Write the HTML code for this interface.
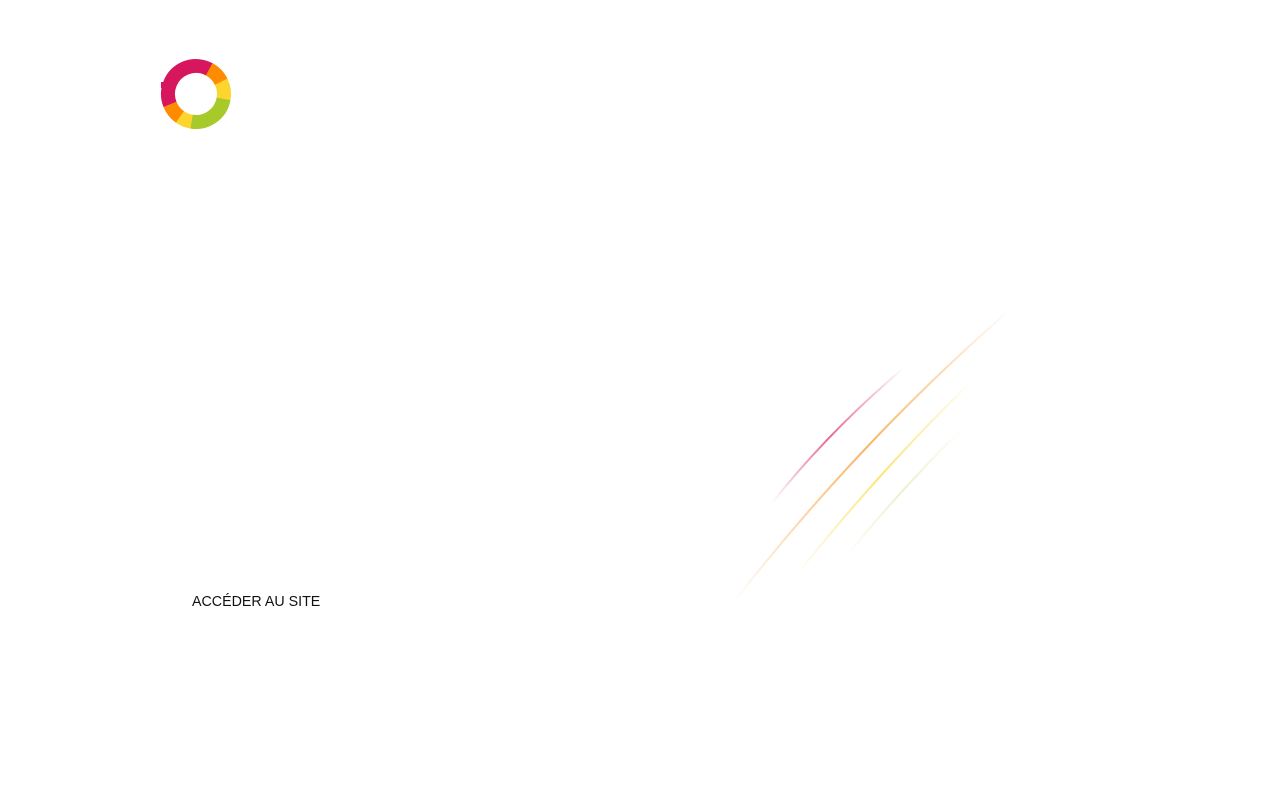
<!DOCTYPE html>
<html><head><meta charset="utf-8"><style>
html,body{margin:0;padding:0;background:#fff;width:1280px;height:800px;overflow:hidden}
.t{position:absolute;left:192px;top:593px;font:15px "Liberation Sans",sans-serif;color:#111;transform:scaleX(0.95);transform-origin:0 0;white-space:nowrap}
svg{position:absolute;left:0;top:0}
</style></head><body>
<svg width="1280" height="800">
<defs>
<linearGradient id="gp" x1="772" y1="503" x2="905" y2="367" gradientUnits="userSpaceOnUse"><stop offset="0" stop-color="#d6175e" stop-opacity="0"/><stop offset=".45" stop-color="#d6175e" stop-opacity=".65"/><stop offset="1" stop-color="#d6175e" stop-opacity="0"/></linearGradient>
<linearGradient id="go" x1="733" y1="603" x2="1013" y2="307" gradientUnits="userSpaceOnUse"><stop offset="0" stop-color="#f7931e" stop-opacity="0"/><stop offset=".5" stop-color="#f7931e" stop-opacity=".7"/><stop offset="1" stop-color="#f7931e" stop-opacity="0"/></linearGradient>
<linearGradient id="gy" x1="795" y1="577" x2="975" y2="378" gradientUnits="userSpaceOnUse"><stop offset="0" stop-color="#fcd116" stop-opacity="0"/><stop offset=".5" stop-color="#fcd116" stop-opacity=".6"/><stop offset="1" stop-color="#fcd116" stop-opacity="0"/></linearGradient>
<linearGradient id="gg" x1="843" y1="560" x2="963" y2="428" gradientUnits="userSpaceOnUse"><stop offset="0" stop-color="#a8c92a" stop-opacity="0"/><stop offset=".5" stop-color="#a8c92a" stop-opacity=".25"/><stop offset="1" stop-color="#a8c92a" stop-opacity="0"/></linearGradient>
</defs>
<path d="M772 503 Q830 430 905 367" stroke="url(#gp)" stroke-width="2" fill="none"/>
<path d="M733 603 Q860 440 1013 307" stroke="url(#go)" stroke-width="2" fill="none"/>
<path d="M795 577 Q880 470 975 378" stroke="url(#gy)" stroke-width="2" fill="none"/>
<path d="M843 560 Q900 490 963 428" stroke="url(#gg)" stroke-width="2" fill="none"/>
<g fill="none" stroke-width="14" transform="translate(196 94)">
<circle r="28" pathLength="360" stroke="#d6175e" stroke-dasharray="141 360" transform="rotate(158)"/>
<circle r="28" pathLength="360" stroke="#ff8c00" stroke-dasharray="37 360" transform="rotate(298)"/>
<circle r="28" pathLength="360" stroke="#fcd62e" stroke-dasharray="37 360" transform="rotate(334)"/>
<circle r="28" pathLength="360" stroke="#a8c92a" stroke-dasharray="90 360" transform="rotate(10)"/>
<circle r="28" pathLength="360" stroke="#fcd62e" stroke-dasharray="27 360" transform="rotate(99)"/>
<circle r="28" pathLength="360" stroke="#ff8c00" stroke-dasharray="33 360" transform="rotate(125)"/>
</g>
<rect x="161" y="82" width="6" height="6" fill="#d6175e"/>
</svg>
<div class="t">ACCÉDER AU SITE</div>
</body></html>
